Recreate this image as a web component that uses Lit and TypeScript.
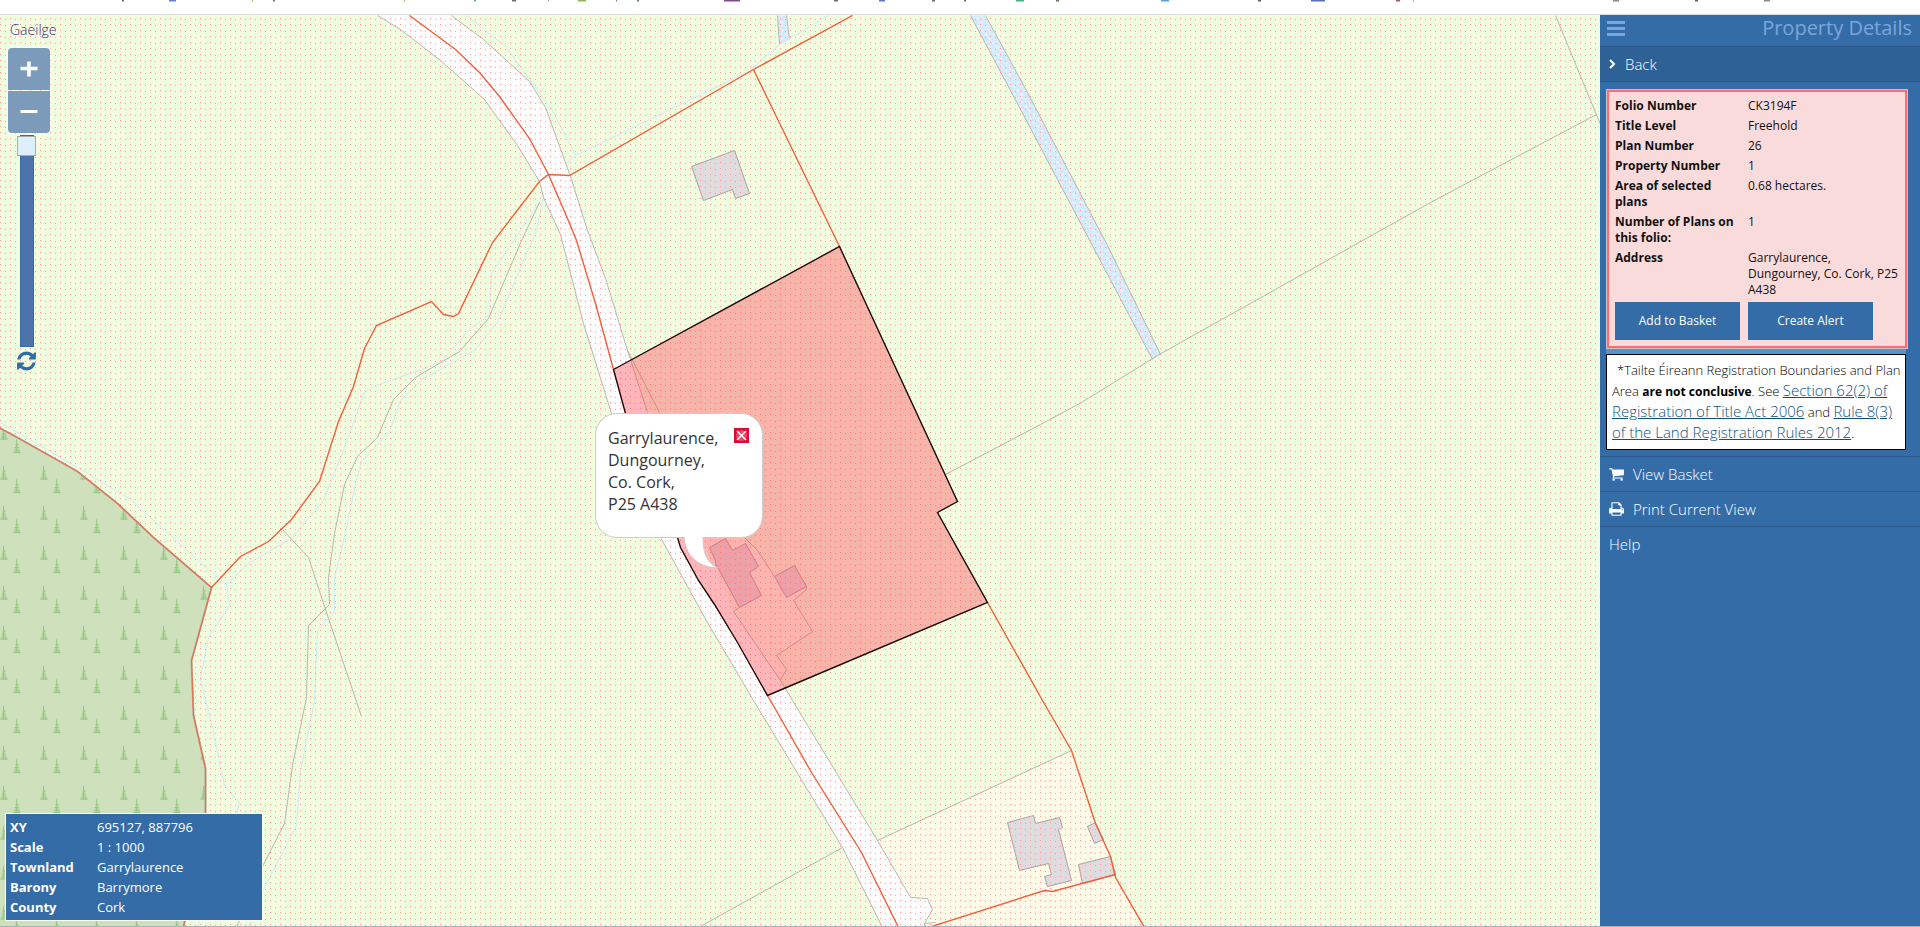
import { LitElement, html, svg, css } from "lit";
import { customElement, property } from "lit/decorators.js";

const FONT = css`"Open Sans", "Noto Sans", sans-serif`;

const CART =
  "M640 1536q0 52-38 90t-90 38-90-38-38-90 38-90 90-38 90 38 38 90zm896 0q0 52-38 90t-90 38-90-38-38-90 38-90 90-38 90 38 38 90zm128-1088v512q0 24-16.5 42.5t-40.5 21.5l-1044 122q13 60 13 70 0 16-24 64h920q26 0 45 19t19 45-19 45-45 19h-1024q-26 0-45-19t-19-45q0-11 8-31.5t16-36 21.5-40 15.5-29.5l-177-823h-204q-26 0-45-19t-19-45 19-45 45-19h256q16 0 28.5 6.5t19.5 15.5 13 24.5 8 26 5.5 29.5 4.5 26h1201q26 0 45 19t19 45z";
const PRINT =
  "M384 1536h896v-256h-896v256zm0-640h896v-384h-160q-40 0-68-28t-28-68v-160h-640v640zm1152 64q0-26-19-45t-45-19-45 19-19 45 19 45 45 19 45-19 19-45zm128 0v416q0 13-9.5 22.5t-22.5 9.5h-224v160q0 40-28 68t-68 28h-960q-40 0-68-28t-28-68v-160h-224q-13 0-22.5-9.5t-9.5-22.5v-416q0-79 56.5-135.5t135.5-56.5h64v-544q0-40 28-68t68-28h672q40 0 88 20t76 48l152 152q28 28 48 76t20 88v256h64q79 0 135.5 56.5t56.5 135.5z";
const REFRESH =
  "M1511 1056q0 5-1 7-64 268-268 434.5t-478 166.5q-146 0-282.5-55t-243.5-157l-129 129q-19 19-45 19t-45-19-19-45v-448q0-26 19-45t45-19h448q26 0 45 19t19 45-19 45l-137 137q71 66 161 102t187 36q134 0 250-65t186-179q11-17 53-117 8-23 30-23h192q13 0 22.5 9.5t9.5 22.5zm25-800v448q0 26-19 45t-45 19h-448q-26 0-45-19t-19-45 19-45l138-138q-148-137-349-137-134 0-250 65t-186 179q-11 17-53 117-8 23-30 23h-199q-13 0-22.5-9.5t-9.5-22.5v-7q65-268 270-434.5t480-166.5q146 0 284 55.5t245 156.5l130-129q19-19 45-19t45 19 19 45z";

/* ---------- map geometry ---------- */

const ROAD =
  "377,15 400,29 440,60 484,99 517,145 539,181 543,197 560,234 583,323 611,413 660,537 707,622 753,700 842,847 882,927 924,927 924,923 932,909 927,898 910,897 877,840 792,700 733,611 647,412 627,350 605,278 587,230 570,176 545,107 529,81 483,39 451,15";
const ROAD_WEST =
  "377,15 400,29 440,60 484,99 517,145 539,181 543,197 560,234 583,323 611,413 660,537 707,622 753,700 842,847 882,927";
const ROAD_EAST =
  "451,15 483,39 529,81 545,107 570,176 587,230 605,278 627,350 647,412";
const ROAD_EAST_LOWER =
  "739,607 733,611 782,683 792,700 877,840 910,897 927,898 932,909 924,923 924,927";
const GARDEN =
  "680,500 715,500 744,537 757,550 774,576 806,586 806,589 793,600 812,631 776,655 786,669 780,679 733,611";
const CREAM =
  "877,840 1071,750 1095,823 1110,856 1115,876 1144,927 924,927 924,923 932,909 927,898 910,897";
const FOREST =
  "-1,427 0,428 15,436 77,471 117,503 153,537 211,587 202,620 191,660 193,715 205,768 205,813 183,927 -1,927";
const PARCEL =
  "613,369 839,246 957,501 937,512 987,602 767,695 737,642 714,604 698,580 680,547 677,537 625,413";

const BUILDINGS = [
  "691,166 734,150 749,193 735,198 732,189 703,200",
  "1007,822 1033,815 1035,823 1059,817 1062,827 1058,829 1071,880 1047,886 1044,876 1051,874 1048,863 1019,870",
  "1087,826 1095,822 1103,839 1094,843",
  "1078,864 1110,856 1115,874 1082,883",
  "709,547 725,538 732,550 745,543 758,566 749,572 761,595 739,607 715,563 715,560",
  "774,576 794,565 806,586 786,597",
];

const STREAMS = [
  { area: "777,15 779,44 789,39 786,15", banks: ["777,15 779,44", "786,15 789,39"] },
  {
    area: "970,15 1019,107 1152,359 1160,354 1107,245 1027,92 985,15",
    banks: ["970,15 1019,107 1152,359", "985,15 1027,92 1107,245 1160,354"],
  },
];

const GREY_LINES = [
  ROAD_WEST,
  ROAD_EAST,
  ROAD_EAST_LOWER,
  "627,350 659,412",
  "744,537 757,550 774,576",
  "806,586 806,589 793,600 812,631 776,655 786,669 780,679",
  "877,840 1071,750",
  "842,847 698,927",
  "924,923 935,922",
  "945,474 1040,424 1081,402 1157,355 1430,202 1596,114",
  "1555,15 1600,124",
  "539,202 522,238 507,273 488,318 459,351 415,377 393,399 377,437 357,456 344,484 334,533 328,577 329,604 308,625 306,697 292,765 284,823 263,864 236,927",
  "282,529 308,557 328,618 361,716",
];

const WATER_LINES = [
  "0,422 77,467 130,499 218,578 226,584 229,605 208,637 200,678 212,728 224,785 239,802 236,813 197,927",
  "226,584 248,563 291,538 323,500 343,450 361,400 364,391 381,383 422,369 442,360 469,329 489,314 491,273 528,218 540,200",
  "543,197 536,230 520,267 498,320 475,349 422,379 400,400 389,431 361,461 354,487 345,533 334,577 334,611 317,630 314,700 300,770 296,825 263,889 248,927",
  "466,15 505,46 524,72 552,110 575,155 566,163",
  "575,155 748,71 779,44 828,15",
];

const RED_LINES = [
  "409,15 455,49 479,72 499,96 529,138 548,174 567,218 576,240 595,303 613,369",
  "767,695 770,700 811,772 861,852 898,927",
  "852,15 753,69 569,175 548,174 539,181 492,242 458,313 453,316 443,314 431,301 376,325 364,348 353,386 347,400 338,421 319,481 291,519 268,541 240,556 211,587",
  "753,69 839,246",
  "987,602 1042,700 1071,750 1095,823 1110,856 1115,877 1144,927",
  "928,927 1044,890 1052,891 1115,874",
];

const FOREST_EDGE =
  "-1,427 0,428 15,436 77,471 117,503 153,537 211,587 202,620 191,660 193,715 205,768 205,813 183,927";

const tree = (x: number, y: number) => svg`
  <path d="M${x} ${y}l1 3v2l1 1v3l1 1v2l1 1v2h-7v-2l1-1v-2l1-1v-3l1-1v-2z" fill="#b6d6a3"></path>
  <path d="M${x} ${y + 1}v13M${x - 1} ${y + 6}h3M${x - 2} ${y + 9}h4M${x - 2} ${y + 12}h5M${x - 3} ${y + 14}h7"
    stroke="#9bc888" fill="none"></path>`;

@customElement("parcel-map")
export class ParcelMap extends LitElement {
  static styles = css`
    :host {
      display: block;
      width: 100%;
      height: 100%;
    }
    svg {
      display: block;
      width: 100%;
      height: 100%;
    }
    .grey {
      fill: none;
      stroke: #b4b9b0;
    }
    .water {
      fill: none;
      stroke: #d0e9fa;
    }
    .red {
      fill: none;
      stroke: #f0603c;
      stroke-width: 1.4;
    }
    .building {
      fill: #dedcde;
      stroke: #a5a3a5;
    }
  `;

  render() {
    return html`<svg role="img" aria-label="Map of the selected property">
      <defs>
        <pattern id="dots" width="10" height="6" patternUnits="userSpaceOnUse">
          <rect width="1" height="1" fill="#ff9a98"></rect>
          <rect x="5" y="1" width="1" height="1" fill="#ff9a98"></rect>
        </pattern>
        <pattern id="trees" width="40" height="40" patternUnits="userSpaceOnUse" y="20">
          ${tree(3.5, 5)}${tree(16.5, 18.5)}
        </pattern>
        <pattern id="ripples" width="8" height="8" patternUnits="userSpaceOnUse">
          <rect width="8" height="8" fill="#d2e9fb"></rect>
          <path d="M0 2h3M4 6h3M5 1h1M1 5h1" stroke="#ffffff"></path>
        </pattern>
      </defs>
      <g transform="translate(0 -15)">
        <rect width="100%" height="200%" fill="#f0fddf"></rect>
        <g transform="translate(0.5 0.5)">
          <polygon points=${CREAM} fill="#fefce9"></polygon>
          <polygon points=${GARDEN} fill="#fefce9"></polygon>
          <polygon points=${ROAD} fill="#ffffff"></polygon>
          ${STREAMS.map((s) => svg`<polygon points=${s.area} fill="url(#ripples)"></polygon>
            ${s.banks.map((b) => svg`<polyline class="grey" points=${b}></polyline>`)}`)}
          ${WATER_LINES.map((p) => svg`<polyline class="water" points=${p}></polyline>`)}
          ${GREY_LINES.map((p) => svg`<polyline class="grey" points=${p}></polyline>`)}
          ${BUILDINGS.map((p) => svg`<polygon class="building" points=${p}></polygon>`)}
        </g>
        <rect width="100%" height="200%" fill="url(#dots)"></rect>
        <polygon points=${FOREST} fill="#cee1bc"></polygon>
        <polygon points=${FOREST} fill="url(#trees)"></polygon>
        <g transform="translate(0.5 0.5)">
          <polyline class="grey" points=${FOREST_EDGE} stroke-width="2"></polyline>
          <polyline class="red" points=${FOREST_EDGE} opacity="0.8"></polyline>
          ${RED_LINES.map((p) => svg`<polyline class="red" points=${p}></polyline>`)}
          <polygon points=${PARCEL} fill="#ff4854" fill-opacity="0.4" stroke="#1c0808" stroke-width="1.4"></polygon>
        </g>
      </g>
    </svg>`;
  }
}

@customElement("map-popup")
export class MapPopup extends LitElement {
  @property({ attribute: false }) lines: string[] = [];

  static styles = css`
    :host {
      display: block;
      width: 168px;
    }
    .bubble {
      box-sizing: border-box;
      display: flex;
      justify-content: space-between;
      align-items: flex-start;
      height: 125px;
      padding: 13px 13px 12px 12px;
      border: 1px solid #cccccc;
      border-radius: 22px;
      background: #ffffff;
      font: 400 16px/22px ${FONT};
      color: #333333;
    }
    address {
      font-style: normal;
    }
    button {
      display: block;
      margin-top: 1px;
      padding: 0;
      border: 0;
      background: none;
    }
    svg {
      display: block;
    }
    .tail {
      position: absolute;
      top: 123px;
      left: 88px;
    }
  `;

  render() {
    return html`
      <div class="bubble">
        <address>${this.lines.map((l) => html`<div>${l}</div>`)}</address>
        <button aria-label="Close">
          <svg width="15" height="15" viewBox="0 0 15 15">
            <rect width="15" height="15" fill="#dc0a32"></rect>
            <circle cx="7.5" cy="7.5" r="5.5" fill="#e64a6a"></circle>
            <path d="M3 3l9 9M12 3l-9 9" stroke="#ffffff" stroke-width="1.4"></path>
          </svg>
        </button>
      </div>
      <svg class="tail" width="38" height="34" viewBox="0 0 38 34">
        <path d="M1 0C2 16 12 31 35 32C24 27 20 18 20 0z" fill="#ffffff"></path>
        <path d="M1 1C2 17 12 31 35 32C24 27 20 18 20 1" fill="none" stroke="#cccccc"></path>
      </svg>
    `;
  }
}

@customElement("zoom-controls")
export class ZoomControls extends LitElement {
  static styles = css`
    :host {
      display: flex;
      flex-direction: column;
      align-items: flex-start;
    }
    .buttons {
      display: grid;
      gap: 1px;
      padding: 2px;
      border-radius: 6px;
      background: rgba(255, 255, 255, 0.4);
    }
    .zoom {
      display: grid;
      place-items: center;
      width: 42px;
      height: 42px;
      padding: 0;
      border: 0;
      background: #7c9bba;
    }
    .in {
      border-radius: 4px 4px 0 0;
    }
    .out {
      border-radius: 0 0 4px 4px;
    }
    input {
      appearance: none;
      writing-mode: vertical-lr;
      direction: rtl;
      width: 19px;
      height: 212px;
      margin: 0 0 0 11px;
      background: none;
    }
    input::-webkit-slider-runnable-track {
      width: 14px;
      height: 212px;
      border: 1px solid #356aa8;
      box-sizing: border-box;
      background: #4c74ab;
    }
    input::-webkit-slider-thumb {
      appearance: none;
      box-sizing: border-box;
      width: 19px;
      height: 20px;
      margin-top: -1px;
      margin-left: -4px;
      border: 1px solid #aaaaaa;
      background: #dfeefc;
    }
    .reset {
      display: block;
      margin: 3px 0 0 11px;
      padding: 0;
      border: 0;
      background: none;
    }
    svg {
      display: block;
    }
  `;

  render() {
    return html`
      <div class="buttons">
        <button class="zoom in" aria-label="Zoom in">
          <svg width="18" height="16" viewBox="0 0 18 16">
            <path d="M0.5 7.5h17M9 0.5v15" stroke="#ffffff" stroke-width="3.6"></path>
          </svg>
        </button>
        <button class="zoom out" aria-label="Zoom out">
          <svg width="18" height="16" viewBox="0 0 18 16">
            <path d="M0.5 7.5h17" stroke="#ffffff" stroke-width="3"></path>
          </svg>
        </button>
      </div>
      <input type="range" min="0" max="20" value="20" aria-label="Zoom level" />
      <button class="reset" aria-label="Reset view">
        <svg width="19" height="22" viewBox="0 0 1536 1792"><path d=${REFRESH} fill="#2f6ca8"></path></svg>
      </button>
    `;
  }
}

@customElement("location-info")
export class LocationInfo extends LitElement {
  @property({ attribute: false }) rows: [string, string][] = [];

  static styles = css`
    :host {
      display: block;
    }
    table {
      width: 258px;
      padding: 3px 5px 3px 4px;
      border: 1px solid #ffffff;
      border-spacing: 0;
      background: #346ca8;
      color: #ffffff;
      font: 400 13px/20px ${FONT};
    }
    th {
      width: 87px;
      padding: 0;
      text-align: left;
      font-weight: 700;
    }
    td {
      padding: 0;
    }
  `;

  render() {
    return html`<table>
      <tbody>
        ${this.rows.map(([k, v]) => html`<tr><th scope="row">${k}</th><td>${v}</td></tr>`)}
      </tbody>
    </table>`;
  }
}

@customElement("property-panel")
export class PropertyPanel extends LitElement {
  @property({ attribute: false }) rows: [string, string][] = [];

  static styles = css`
    :host {
      display: block;
      background: #346ca8;
      color: #ffffff;
      font: 400 12px/16px ${FONT};
    }
    button {
      font: inherit;
      cursor: pointer;
    }
    svg {
      display: block;
    }
    header {
      box-sizing: border-box;
      display: flex;
      justify-content: space-between;
      align-items: center;
      height: 31px;
      padding: 0 8px 5px 7px;
      color: #7aa6da;
    }
    .bars {
      padding: 0;
      border: 0;
      background: none;
      color: inherit;
    }
    h1 {
      margin: 0;
      font: 400 20px/26px ${FONT};
    }
    .item {
      box-sizing: border-box;
      display: flex;
      align-items: center;
      gap: 9px;
      width: 100%;
      height: 35px;
      padding: 0 9px;
      border: 0;
      border-top: 1px solid #285788;
      background: none;
      color: #ffffff;
      font: 300 15px/24px ${FONT};
      text-decoration: none;
    }
    .back {
      gap: 10px;
      height: 36px;
      border-bottom: 1px solid #285788;
      background: #2e6297;
    }
    .cards {
      padding: 7px 14px 6px 6px;
    }
    .details {
      margin-right: -2px;
      border: 1px solid #c9c4c4;
      background: #fadbdc;
      color: #111111;
    }
    .inner {
      padding: 4px 6px 6px;
      border: 2px solid #ff6b70;
    }
    table {
      width: 100%;
      border-spacing: 0;
      table-layout: fixed;
    }
    th,
    td {
      padding: 2px 0;
      vertical-align: top;
      text-align: left;
      font-weight: 400;
    }
    th {
      width: 123px;
      padding-right: 10px;
      font-weight: 700;
    }
    .actions {
      display: flex;
      gap: 8px;
      padding-top: 2px;
    }
    .action {
      width: 125px;
      height: 38px;
      padding: 0;
      border: 0;
      background: #346ca8;
      color: #ffffff;
      font-weight: 500;
    }
    .strip {
      height: 5px;
      background: #5596c8;
    }
    .note {
      margin: 0;
      padding: 5px 4px 5px 5px;
      border: 1px solid #000000;
      background: #ffffff;
      color: #000000;
      font: 300 13px/21px ${FONT};
      text-indent: 5px;
    }
    .note b {
      font-size: 12px;
      line-height: 16px;
      font-weight: 700;
    }
    .note a {
      color: #0b5283;
      font-size: 15px;
      line-height: 16px;
    }
  `;

  render() {
    return html`
      <header>
        <button class="bars" aria-label="Menu">
          <svg width="18" height="15" viewBox="0 0 18 15">
            <path d="M0 1.5h18M0 7.5h18M0 13.5h18" stroke="currentColor" stroke-width="3"></path>
          </svg>
        </button>
        <h1>Property Details</h1>
      </header>
      <button class="item back">
        <svg width="6" height="10" viewBox="0 0 6 10">
          <path d="M1 1l4 4-4 4" fill="none" stroke="#ffffff" stroke-width="2"></path>
        </svg>
        Back
      </button>
      <div class="cards">
        <section class="details">
          <div class="inner">
            <table>
              <tbody>
                ${this.rows.map(([k, v]) => html`<tr><th scope="row">${k}</th><td>${v}</td></tr>`)}
              </tbody>
            </table>
            <div class="actions">
              <button class="action">Add to Basket</button>
              <button class="action">Create Alert</button>
            </div>
          </div>
        </section>
        <div class="strip"></div>
        <p class="note">
          *Tailte Éireann Registration Boundaries and Plan Area <b>are not conclusive</b>. See
          <a href="#section">Section 62(2) of Registration of Title Act 2006</a> and
          <a href="#rule">Rule 8(3) of the Land Registration Rules 2012</a>.
        </p>
      </div>
      <nav>
        <a class="item" href="#basket">
          <svg width="15" height="16" viewBox="0 0 1664 1792"><path d=${CART} fill="#ffffff"></path></svg>
          View Basket
        </a>
        <a class="item" href="#print">
          <svg width="15" height="16" viewBox="0 0 1664 1792"><path d=${PRINT} fill="#ffffff"></path></svg>
          Print Current View
        </a>
        <a class="item" href="#help">Help</a>
      </nav>
    `;
  }
}

const STRIP_MARKS: [number, number, string][] = [
  [122, 2, "#555555"], [169, 7, "#3f6fd0"], [252, 1, "#b08a50"], [273, 2, "#665566"],
  [404, 1, "#c09a50"], [474, 2, "#3fae6a"], [512, 4, "#555555"], [548, 1, "#888888"],
  [578, 8, "#7ca83a"], [616, 1, "#884488"], [637, 2, "#446688"], [724, 16, "#6b2a7a"],
  [834, 4, "#555555"], [879, 6, "#3f62c8"], [932, 3, "#555555"], [964, 2, "#445588"],
  [1016, 8, "#1fa868"], [1056, 3, "#665544"], [1161, 8, "#3d8fd0"], [1258, 3, "#444444"],
  [1311, 14, "#4257b0"], [1396, 4, "#8a4540"], [1413, 1, "#c09a50"], [1613, 6, "#777777"],
  [1695, 3, "#444466"], [1764, 6, "#777777"],
];

@customElement("app-root")
export class AppRoot extends LitElement {
  private location: [string, string][] = [
    ["XY", "695127, 887796"],
    ["Scale", "1 : 1000"],
    ["Townland", "Garrylaurence"],
    ["Barony", "Barrymore"],
    ["County", "Cork"],
  ];

  private details: [string, string][] = [
    ["Folio Number", "CK3194F"],
    ["Title Level", "Freehold"],
    ["Plan Number", "26"],
    ["Property Number", "1"],
    ["Area of selected plans", "0.68 hectares."],
    ["Number of Plans on this folio:", "1"],
    ["Address", "Garrylaurence, Dungourney, Co. Cork, P25 A438"],
  ];

  static styles = css`
    :host {
      box-sizing: border-box;
      display: grid;
      grid-template-rows: auto 1fr;
      height: 100vh;
      border-bottom: 1px solid #a3b4bd;
      background: #ffffff;
      overflow: hidden;
    }
    .strip {
      height: 14px;
      border-bottom: 1px solid #dadfdc;
    }
    .strip svg {
      display: block;
      width: 100%;
      height: 2px;
    }
    main {
      display: grid;
      grid-template-columns: 1fr 320px;
      min-height: 0;
    }
    .map {
      position: relative;
      min-width: 0;
      overflow: hidden;
    }
    .language {
      position: absolute;
      top: 5px;
      left: 10px;
      color: #4b2285;
      font: 300 14px/20px ${FONT};
      text-decoration: none;
    }
    .zoom {
      position: absolute;
      top: 31px;
      left: 6px;
    }
    .popup {
      position: absolute;
      top: 398px;
      left: 595px;
    }
    .info {
      position: absolute;
      left: 5px;
      bottom: 5px;
    }
  `;

  render() {
    return html`
      <div class="strip">
        <svg aria-hidden="true">
          ${STRIP_MARKS.map(([x, w, c]) => svg`<rect x=${x} width=${w} height="1.5" fill=${c} opacity="0.85"></rect>`)}
        </svg>
      </div>
      <main>
        <div class="map">
          <parcel-map></parcel-map>
          <a class="language" href="#ga" lang="ga">Gaeilge</a>
          <zoom-controls class="zoom"></zoom-controls>
          <map-popup class="popup" .lines=${["Garrylaurence,", "Dungourney,", "Co. Cork,", "P25 A438"]}></map-popup>
          <location-info class="info" .rows=${this.location}></location-info>
        </div>
        <property-panel .rows=${this.details}></property-panel>
      </main>
    `;
  }
}
